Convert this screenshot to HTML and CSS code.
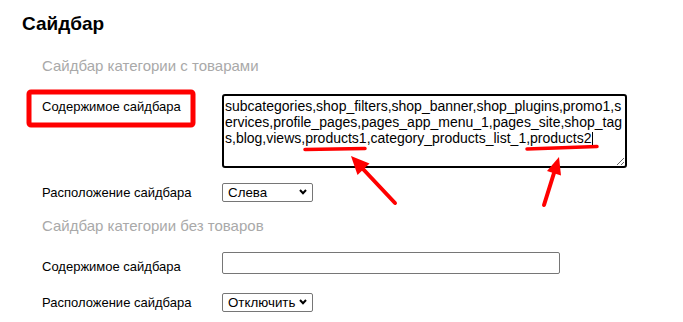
FILE: index.html
```html
<!DOCTYPE html>
<html lang="ru">
<head>
  <meta charset="UTF-8" />
  <meta name="viewport" content="width=device-width, initial-scale=1.0" />
  <title>Сайдбар</title>
  <link rel="stylesheet" href="styles.css">
</head>
<body>
  <div class="page">
    <h1 class="title">Сайдбар</h1>

    <section class="group">
      <div class="group-title">Сайдбар категории с товарами</div>
      <div class="row row-area">
        <label class="label">Содержимое сайдбара</label>
        <textarea class="field-area">subcategories,shop_filters,shop_banner,shop_plugins,promo1,services,profile_pages,pages_app_menu_1,pages_site,shop_tags,blog,views,products1,category_products_list_1,products2</textarea>
      </div>
      <div class="row row-select">
        <label class="label">Расположение сайдбара</label>
        <span class="select-wrap">
          <select class="field-select">
            <option>Слева</option>
            <option>Справа</option>
            <option>Отключить</option>
          </select>
          <svg class="chevron" width="8" height="6" viewBox="0 0 8 6"><path d="M1 1 L4 4.2 L7 1" fill="none" stroke="#000" stroke-width="2" /></svg>
        </span>
      </div>
    </section>

    <section class="group">
      <div class="group-title">Сайдбар категории без товаров</div>
      <div class="row row-input">
        <label class="label">Содержимое сайдбара</label>
        <input type="text" class="field-input" />
      </div>
      <div class="row row-select row-last">
        <label class="label">Расположение сайдбара</label>
        <span class="select-wrap">
          <select class="field-select">
            <option>Отключить</option>
            <option>Слева</option>
            <option>Справа</option>
          </select>
          <svg class="chevron" width="8" height="6" viewBox="0 0 8 6"><path d="M1 1 L4 4.2 L7 1" fill="none" stroke="#000" stroke-width="2" /></svg>
        </span>
      </div>
    </section>
  </div>

  <!-- пометки поверх скриншота -->
  <svg class="marks" width="683" height="322" viewBox="0 0 683 322">
    <rect x="29" y="92" width="164" height="33" rx="2" fill="none" stroke="#ff0000" stroke-width="5" />
    <line x1="305" y1="149.5" x2="365" y2="148.5" stroke="#ff0000" stroke-width="3.5" stroke-linecap="round" />
    <line x1="527" y1="149" x2="597" y2="146.5" stroke="#ff0000" stroke-width="3.5" stroke-linecap="round" />
    <line x1="395" y1="203" x2="363" y2="169" stroke="#ff0000" stroke-width="4" stroke-linecap="round" />
    <polygon points="351,156 369.5,163.5 357.5,175" fill="#ff0000" />
    <line x1="544" y1="205" x2="554" y2="173" stroke="#ff0000" stroke-width="4" stroke-linecap="round" />
    <polygon points="559,157 561,175.5 547,171" fill="#ff0000" />
    <line class="caret" x1="592.5" y1="132" x2="592.5" y2="145" />
  </svg>
</body>
</html>
```

FILE: styles.css
```css
body {
  margin: 0;
  position: relative;
  font-family: "Liberation Sans", Arial, sans-serif;
  color: #000;
  background: #fff;
}
.page {
  padding: 13px 0 0 22px;
}
.title {
  margin: 0 0 7px;
  font-size: 19px;
  line-height: 22px;
  font-weight: bold;
}
.group {
  padding: 14px 0 0 20px;
}
.group-title {
  font-size: 15px;
  line-height: 20px;
  color: #a9a9a9;
}
.row {
  display: flex;
  align-items: center;
}
.label {
  width: 180px;
  flex: none;
  font-size: 13px;
  line-height: 16px;
}
.row-area {
  margin-top: 18px;
  align-items: flex-start;
}
.row-area .label {
  padding-top: 5px;
}
.row-select {
  margin-top: 15px;
}
.row-input {
  margin-top: 16px;
  align-items: flex-start;
}
.row-input .label {
  padding-top: 7px;
}
.row-last {
  margin-top: 18px;
}
.field-area {
  box-sizing: border-box;
  width: 405px;
  height: 74px;
  margin: 0;
  padding: 2px 0 1px 1px;
  border: 2px solid #000;
  border-radius: 3px;
  font-family: "Liberation Sans", Arial, sans-serif;
  font-size: 14px;
  line-height: 16px;
  color: #000;
  outline: none;
}
.select-wrap {
  position: relative;
  display: inline-flex;
}
.field-select {
  appearance: none;
  box-sizing: border-box;
  width: 91px;
  height: 19px;
  margin: 0;
  padding: 0 0 0 5px;
  border: 1px solid #767676;
  border-radius: 2px;
  background: #fff;
  font-family: "Liberation Sans", Arial, sans-serif;
  font-size: 13.33px;
  line-height: 17px;
  color: #000;
}
.chevron {
  position: absolute;
  right: 6px;
  top: 6px;
  pointer-events: none;
}
.field-input {
  box-sizing: border-box;
  width: 338px;
  height: 22px;
  margin: 0;
  border: 1px solid #767676;
  border-radius: 2px;
  font-family: "Liberation Sans", Arial, sans-serif;
  font-size: 14px;
}
.marks {
  position: absolute;
  top: 0;
  left: 0;
  pointer-events: none;
}
.caret {
  stroke: #000;
  stroke-width: 1;
}
```
